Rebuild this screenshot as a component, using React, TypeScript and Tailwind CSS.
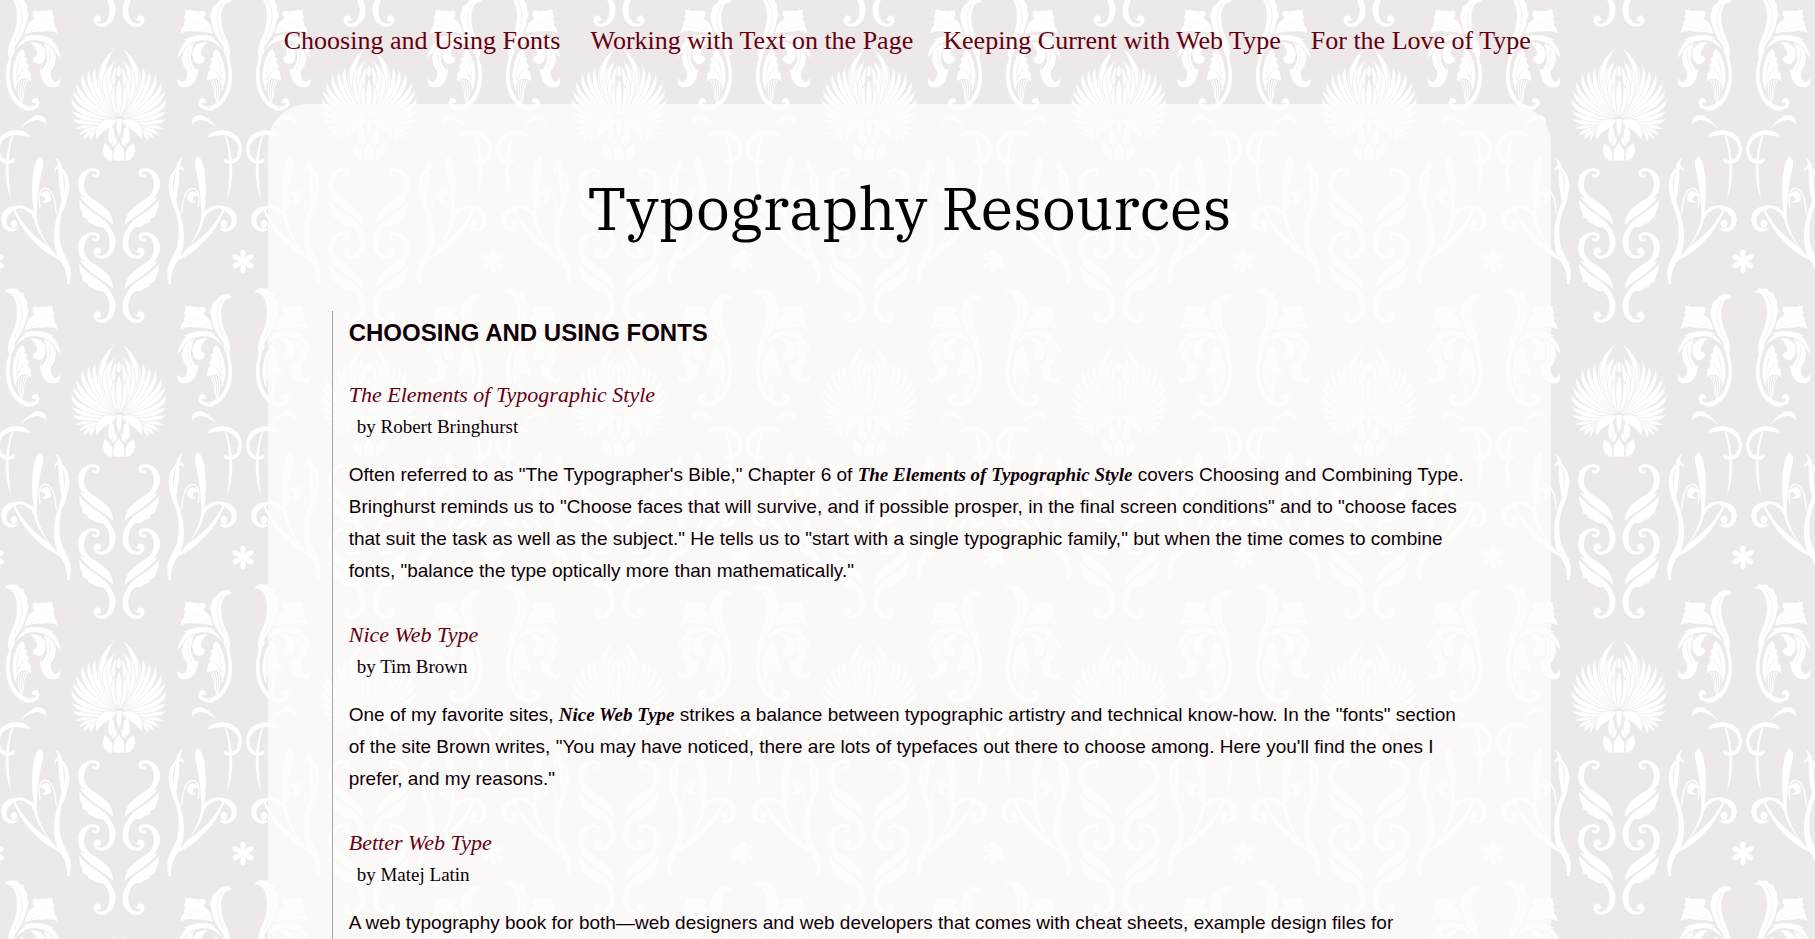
import type { ReactNode } from "react";

const GROUND = "#eee9e9";

type Petal = [number, number, number, number, number, number, number];

// tip x, tip y, base x, base y, control x, control y, half width
const petals: Petal[] = [
  [272, 428, 304, 372, 270, 392, 7],
  [248, 424, 308, 370, 268, 388, 7],
  [232, 408, 314, 368, 266, 384, 7],
  [218, 388, 322, 365, 268, 376, 7],
  [212, 356, 334, 363, 250, 376, 8],
  [214, 330, 338, 361, 240, 362, 8],
  [213, 292, 340, 359, 222, 344, 8],
  [218, 266, 342, 357, 226, 318, 8],
  [229, 238, 344, 356, 226, 300, 8],
  [250, 214, 346, 354, 232, 276, 8],
  [270, 203, 348, 352, 248, 264, 8],
  [289, 192, 350, 350, 262, 256, 8],
  [311, 180, 351, 348, 276, 246, 8],
  [352, 138, 340, 320, 268, 220, 9],
  [332, 190, 352, 346, 290, 256, 8],
  [350, 178, 340, 300, 306, 222, 7],
  [342, 216, 354, 344, 314, 270, 8],
  [354, 196, 346, 274, 332, 226, 6],
  [346, 250, 356, 350, 328, 296, 7],
];

function petalPath([tx, ty, bx, by, cx, cy, w]: Petal) {
  const left: string[] = [];
  const right: string[] = [];
  const steps = 16;
  for (let i = 0; i <= steps; i++) {
    const t = i / steps;
    const u = 1 - t;
    const x = u * u * bx + 2 * u * t * cx + t * t * tx;
    const y = u * u * by + 2 * u * t * cy + t * t * ty;
    const dx = 2 * u * (cx - bx) + 2 * t * (tx - cx);
    const dy = 2 * u * (cy - by) + 2 * t * (ty - cy);
    const len = Math.hypot(dx, dy);
    const half = w * (0.25 + 0.75 * Math.sin(Math.PI * Math.pow(t, 0.9))) * Math.min(1, u * 5);
    left.push(`${(x - (dy / len) * half).toFixed(1)} ${(y + (dx / len) * half).toFixed(1)}`);
    right.unshift(`${(x + (dy / len) * half).toFixed(1)} ${(y - (dx / len) * half).toFixed(1)}`);
  }
  return `M${[...left, ...right].join("L")}Z`;
}

function Scroll() {
  return (
    <g>
      <path d="M276 528Q284 536 294 530Q303 520 296 510Q284 500 264 507Q232 520 234 556Q238 588 268 604Q296 616 312 628Q300 606 276 596Q250 578 252 550Q254 524 272 514Q288 510 290 520Q288 528 276 522Z" />
      <path d="M240 590Q290 600 316 624Q338 644 340 674Q322 658 296 642Q262 620 240 590Z" />
      <path d="M238 600Q262 628 296 648Q330 668 346 714Q350 760 318 774Q290 782 281 762Q278 746 292 742Q304 744 303 756Q298 764 291 758Q292 768 304 767Q330 762 329 722Q326 694 308 680Q290 684 276 670Q266 672 262 656Q246 656 248 640Q236 624 238 600Z" />
    </g>
  );
}

function Acanthus({ tip }: { tip: ReactNode }) {
  return (
    <g transform="translate(0 -48)">
      {tip}
      <path d="M76 142Q80 118 104 102Q92 92 101 80Q112 78 116 84Q126 76 136 82Q148 74 160 80Q154 90 163 98Q154 106 164 114Q158 122 168 130L173 148Q150 138 128 143Q100 140 76 150Z" />
      <path d="M84 138Q110 118 150 106M92 142Q120 128 158 126" fill="none" stroke={GROUND} strokeWidth="1" />
      <path d="M48 196Q62 160 100 156Q146 152 166 182Q178 198 182 220Q174 216 168 206Q150 172 108 168Q74 166 48 196Z" />
      <path d="M70 162Q110 146 160 168" fill="none" stroke="#fffffe" strokeWidth="4" />
      <path d="M92 174Q128 174 136 200Q140 224 126 238Q110 244 100 232Q96 220 108 216Q120 206 92 174Z" />
      <path d="M132 178Q164 186 168 222Q166 248 152 262Q150 288 166 294Q176 292 178 282Q186 298 172 308Q148 314 132 296Q124 284 118 254Q128 262 134 246Q150 226 132 178Z" />
      <path d="M150 196Q156 226 138 258" fill="none" stroke={GROUND} strokeWidth="2" />
      <path d="M40 196Q8 250 22 312Q40 370 82 380Q112 380 119 360Q119 342 104 341Q92 346 98 358Q106 352 108 360Q102 370 84 366Q48 356 34 312Q18 252 46 196Z" />
      <path d="M66 194Q78 206 74 220Q86 222 78 236Q92 242 82 256Q96 268 92 292Q74 276 56 290Q46 302 50 326Q32 290 40 252Q44 216 66 194Z" />
      <path
        d="M58 292Q50 320 62 352M66 288Q56 318 66 358M74 286Q62 316 68 348M82 288Q68 312 70 340"
        fill="none"
        stroke="#fffffe"
        strokeWidth="3"
      />
      <path d="M62 220Q48 250 50 290M76 250Q58 264 52 290" fill="none" stroke={GROUND} strokeWidth="2" />
    </g>
  );
}

function Reeds() {
  return (
    <g>
      <path d="M60 386Q86 352 112 344Q140 344 138 374Q128 358 108 360Q84 366 60 386Z" />
      <path d="M91 410Q70 408 46 404Q2 410 -2 446Q0 478 24 480Q38 480 42 474Q48 484 36 490Q-8 498 -12 446Q-8 398 42 391Q78 390 91 410Z" />
      <path d="M40 404Q24 460 26 520Q28 570 34 602Q18 560 17 510Q18 450 36 404Z" />
      <path d="M120 470Q134 476 128 500Q112 566 109 652L102 644Q90 560 102 506Q108 474 120 470Z" />
      <path d="M163 470Q186 484 186 504Q208 524 208 560Q204 600 186 640Q172 684 182 738Q190 760 205 786Q218 814 208 852L200 852Q204 820 188 794Q160 760 162 700Q164 664 180 620Q202 560 192 528Q184 506 170 506Q166 510 168 518Q156 504 172 498Q176 486 163 470Z" />
      <path d="M176 500Q174 560 188 612Q198 552 184 508Z" />
      <path d="M120 622Q110 580 130 566Q164 560 169 642" fill="none" stroke="#fffffe" strokeWidth="4" />
      <path d="M120 588Q124 572 142 574Q156 584 152 600Q142 612 124 606Q140 602 134 592Q130 586 120 588Z" />
      <path d="M40 624Q72 606 100 634Q112 648 112 664Q120 700 150 744L186 784Q160 772 140 758Q70 708 36 622L44 624Q76 694 146 740Q108 694 102 656Q84 620 40 624Z" />
      <path d="M66 616Q4 616 3 660Q8 694 38 695Q52 692 56 684Q34 690 22 676Q8 640 66 622Z" />
      <path d="M34 664Q48 654 52 670Q52 684 38 684Q28 674 34 664Z" />
    </g>
  );
}

function Thistle() {
  return (
    <g>
      {petals.map((p) => (
        <path key={p.join("-")} d={petalPath(p)} stroke={GROUND} strokeWidth="2" strokeLinejoin="round" />
      ))}
      <path d="M350 360Q306 346 290 382Q282 406 290 420Q304 396 322 388Q342 378 350 362Z" stroke={GROUND} strokeWidth="2" />
      <path d="M334 372Q344 390 344 408Q342 424 332 432Q320 414 326 392Z" />
      <path d="M348 408Q352 424 346 434L336 440Q338 420 348 408Z" />
      <path d="M314 430Q334 440 337 462Q336 474 338 482L326 481Q304 464 310 440Z" />
    </g>
  );
}

function HalfMotif() {
  return (
    <g>
      <Scroll />
      <g transform="translate(0 192)">
        <Scroll />
      </g>
      <Reeds />
      <Thistle />
    </g>
  );
}

function Motif() {
  return (
    <g>
      <HalfMotif />
      <Acanthus
        tip={
          <g>
            <path d="M14 38Q22 20 42 26Q52 22 58 36Q74 36 74 54Q86 62 80 78Q92 88 80 108Q78 136 58 166Q38 194 28 224Q18 206 30 174Q46 144 50 112Q54 72 40 50Q30 36 14 38Z" />
            <path d="M46 42Q70 74 66 106Q62 140 44 172" fill="none" stroke={GROUND} strokeWidth="2" />
          </g>
        }
      />
      <g transform="translate(714 0) scale(-1 1)">
        <HalfMotif />
        <Acanthus
          tip={
            <g>
              <path d="M18 54Q28 38 46 44Q58 46 64 60Q78 64 78 82Q88 92 80 112Q76 140 58 168Q38 194 28 224Q18 206 30 174Q46 144 50 112Q52 78 40 62Q32 52 18 54Z" />
              <path d="M48 60Q66 84 62 112Q58 144 44 172" fill="none" stroke={GROUND} strokeWidth="2" />
            </g>
          }
        />
      </g>
      <path d="M357 234Q368 262 366 300Q362 336 357 350Q350 336 347 300Q346 262 357 234Z" stroke={GROUND} strokeWidth="2" />
      <path d="M357 196Q364 206 362 224L357 232L351 224Q350 206 357 196Z" />
      <path d="M348 356L366 356Q368 386 357 414Q346 386 348 356Z" stroke={GROUND} strokeWidth="2" />
      <path d="M357 428Q376 448 374 470L370 482L344 482L340 470Q338 448 357 428Z" />
      <g transform="translate(729 784)">
        {[0, 60, 120, 180, 240, 300].map((turn) => (
          <path key={turn} d="M-3 0Q-12 -26 -6 -33Q0 -38 6 -33Q12 -26 3 0Z" transform={`rotate(${turn})`} />
        ))}
      </g>
    </g>
  );
}

function Wallpaper() {
  return (
    <svg className="absolute inset-0 -z-10 h-full w-full" aria-hidden="true">
      <defs>
        <g id="motif" fill="#fffffe">
          <Motif />
        </g>
        <pattern id="damask" width="750" height="888" patternUnits="userSpaceOnUse" patternTransform="scale(0.333333)">
          <rect width="750" height="888" fill={GROUND} />
          {[-888, 0, 888].map((y) =>
            [-750, 0, 750].map((x) => <use key={`${x} ${y}`} href="#motif" x={x} y={y} />),
          )}
        </pattern>
      </defs>
      <rect width="100%" height="100%" fill="url(#damask)" />
    </svg>
  );
}

const sections = [
  "Choosing and Using Fonts",
  "Working with Text on the Page",
  "Keeping Current with Web Type",
  "For the Love of Type",
];

function Work({ children }: { children: ReactNode }) {
  return <em className="font-['Liberation_Serif',serif] font-bold">{children}</em>;
}

const resources = [
  {
    title: "The Elements of Typographic Style",
    author: "Robert Bringhurst",
    text: (
      <>
        Often referred to as "The Typographer's Bible," Chapter 6 of <Work>The Elements of Typographic Style</Work>{" "}
        covers Choosing and Combining Type. Bringhurst reminds us to "Choose faces that will survive, and if possible
        prosper, in the final screen conditions" and to "choose faces that suit the task as well as the subject." He
        tells us to "start with a single typographic family," but when the time comes to combine fonts, "balance the
        type optically more than mathematically."
      </>
    ),
  },
  {
    title: "Nice Web Type",
    author: "Tim Brown",
    text: (
      <>
        One of my favorite sites, <Work>Nice Web Type</Work> strikes a balance between typographic artistry and
        technical know-how. In the "fonts" section of the site Brown writes, "You may have noticed, there are lots of
        typefaces out there to choose among. Here you'll find the ones I prefer, and my reasons."
      </>
    ),
  },
  {
    title: "Better Web Type",
    author: "Matej Latin",
    text: <>A web typography book for both—web designers and web developers that comes with cheat sheets, example design files for</>,
  },
];

export default function App() {
  return (
    <div className="relative isolate h-screen overflow-hidden bg-[#eee9e9] font-['Liberation_Sans',Arial,sans-serif] text-[19px] leading-8 text-[#100008]">
      <Wallpaper />
      <div className="ml-[14.75%] w-[70.7%]">
        <nav className="flex h-26 justify-between pt-6 pr-5 pl-4 font-['Liberation_Serif',serif] text-[26px] leading-[34px] text-[#660011]">
          {sections.map((name, i) => (
            <a key={name} href={`#section-${i + 1}`}>
              {name}
            </a>
          ))}
        </nav>
        <main className="rounded-t-[40px] bg-[#fcfcfa]/80 px-16 pt-16">
          <h1 className="pb-[63px] text-center font-['IBM_Plex_Serif','Noto_Serif','Droid_Serif','DejaVu_Serif',serif] text-[60px] leading-[80px] text-black">
            Typography Resources
          </h1>
          <section id="section-1" className="border-l border-[#a9a5a5] pl-4">
            <h2 className="mb-6 text-2xl leading-11 font-bold uppercase">Choosing and Using Fonts</h2>
            {resources.map((r) => (
              <article key={r.title} className="mb-8">
                <h3 className="font-['Liberation_Serif',serif] text-[22px] leading-8 text-[#660011] italic">
                  <a href="#section-1">{r.title}</a>
                </h3>
                <p className="mb-4 pl-2 font-['Liberation_Serif',serif]">by {r.author}</p>
                <p className="pr-4">{r.text}</p>
              </article>
            ))}
          </section>
        </main>
      </div>
    </div>
  );
}
